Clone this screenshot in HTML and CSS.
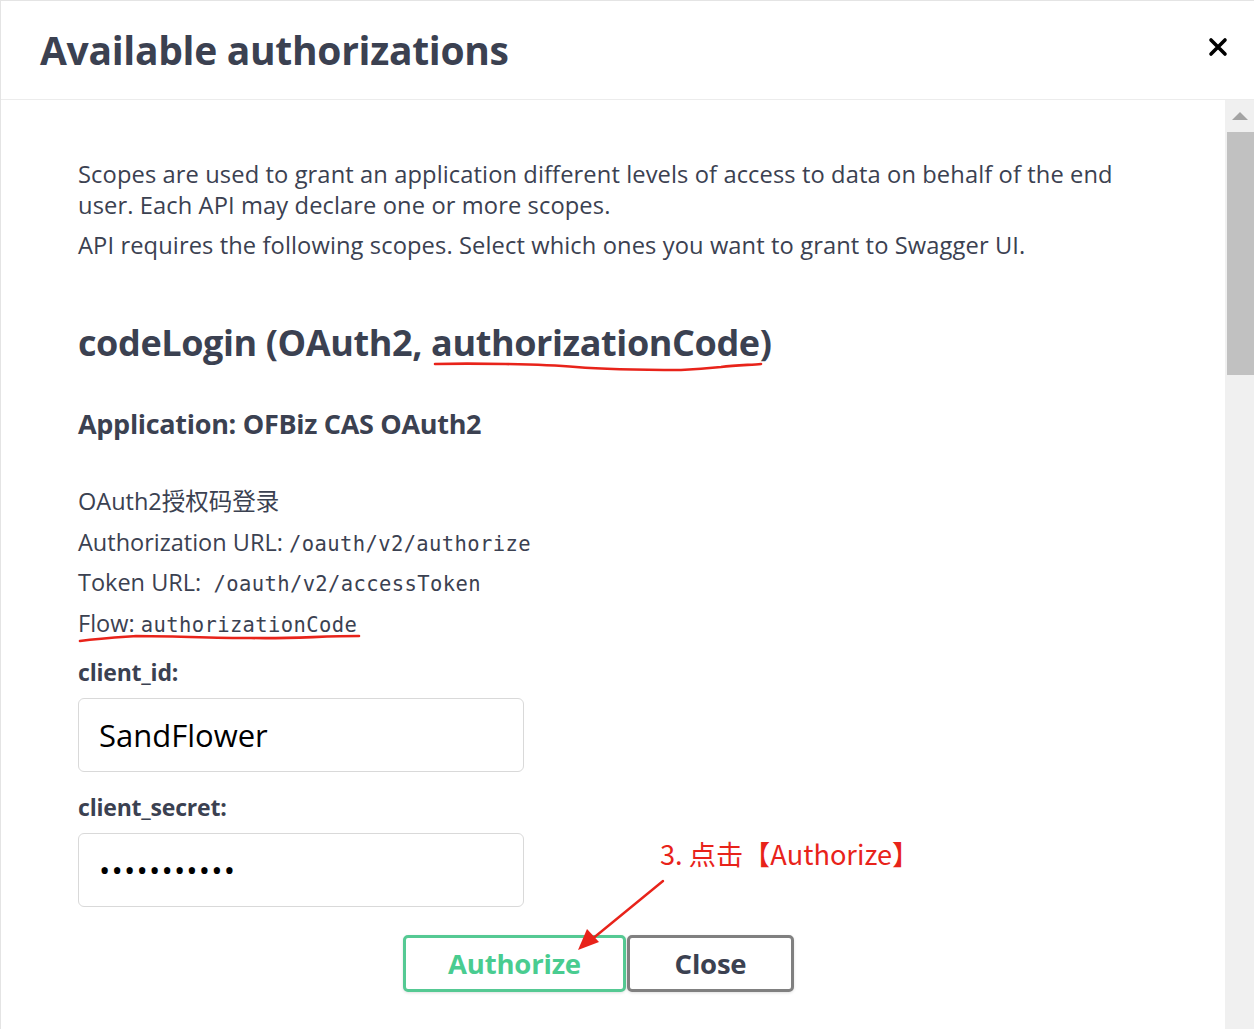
FILE: index.html
```html
<!DOCTYPE html>
<html lang="en">
<head>
<meta charset="utf-8">
<title>Available authorizations</title>
<link rel="stylesheet" href="styles.css">
</head>
<body>
<div class="modal">
  <header class="modal-header">
    <h1 class="modal-title">Available authorizations</h1>
    <button class="close-x" aria-label="Close">
      <svg width="20" height="20" viewBox="0 0 20 20"><path d="M3 3 L17 17 M17 3 L3 17" stroke="#000" stroke-width="3.6" stroke-linecap="round"/></svg>
    </button>
  </header>
  <div class="modal-body">
    <div class="content">
      <p class="desc">Scopes are used to grant an application different levels of access to data on behalf of the end<br>user. Each API may declare one or more scopes.</p>
      <p class="desc second">API requires the following scopes. Select which ones you want to grant to Swagger UI.</p>
      <h2 class="scheme-title">codeLogin (OAuth2, authorizationCode)</h2>
      <h3 class="app-title">Application: OFBiz CAS OAuth2</h3>
      <div class="info">
        <p class="info-row">OAuth2授权码登录</p>
        <p class="info-row">Authorization URL: <code>/oauth/v2/authorize</code></p>
        <p class="info-row">Token URL:&nbsp; <code>/oauth/v2/accessToken</code></p>
        <p class="info-row">Flow: <code>authorizationCode</code></p>
      </div>
      <label class="field-label">client_id:</label>
      <input class="field-input" type="text" value="SandFlower">
      <label class="field-label secret">client_secret:</label>
      <input class="field-input" type="password" value="abcdefghijk">
      <div class="btn-row">
        <button class="btn authorize">Authorize</button>
        <button class="btn close">Close</button>
      </div>

      <div class="note">3. 点击【Authorize】</div>
      <svg class="overlay" width="1225" height="929" viewBox="0 100 1225 929">
        <path d="M434 364 C 470 363, 540 364, 575 367 C 610 370, 650 370, 680 370 C 700 369, 710 368, 720 367 C 735 365, 750 365, 760 364" stroke="#e8231a" stroke-width="2.6" fill="none" stroke-linecap="round"/>
        <path d="M79 641 C 100 638, 120 637, 135 636 C 170 636, 210 638, 250 638 C 290 639, 320 636, 358 636" stroke="#e8231a" stroke-width="2.6" fill="none" stroke-linecap="round"/>
        <path d="M662 881 L590 940" stroke="#e8231a" stroke-width="2.4" fill="none" stroke-linecap="round"/>
        <path d="M577 950 L586 929 L598 942 Z" fill="#e8231a"/>
      </svg>
    </div>
    <div class="scrollbar">
      <div class="sb-arrow"></div>
      <div class="sb-thumb"></div>
    </div>
  </div>
</div>
</body>
</html>
```
FILE: styles.css
```css
* { box-sizing: border-box; }
html, body { margin: 0; padding: 0; background: #fff; }
body {
  font-family: "Open Sans", "Noto Sans", "Noto Sans CJK SC", sans-serif;
  color: #3b4151;
}
.modal {
  width: 1254px;
  height: 1029px;
  display: flex;
  flex-direction: column;
  overflow: hidden;
  border-top: 1px solid #e4e4e4;
  border-left: 1px solid #e4e4e4;
}
.modal-header {
  height: 99px;
  flex: none;
  display: flex;
  align-items: center;
  justify-content: space-between;
  padding: 0 26px 0 39px;
  border-bottom: 1px solid #ececec;
}
.modal-title {
  margin: 0 0 2px;
  font-size: 39px;
  font-weight: 700;
  letter-spacing: -0.3px;
  color: #3b4151;
}
.close-x {
  border: 0;
  background: none;
  padding: 0;
  width: 20px;
  height: 20px;
  margin-top: -6px;
  display: flex;
}
.modal-body {
  flex: 1;
  display: flex;
  min-height: 0;
}
.content {
  position: relative;
  flex: 1;
  padding: 59px 80px 0 77px;
}
.desc {
  margin: 0;
  font-size: 23.7px;
  line-height: 31px;
  letter-spacing: 0.1px;
}
.desc.second { margin-top: 9px; }
.scheme-title {
  margin: 60px 0 0;
  font-size: 36px;
  line-height: 44px;
  font-weight: 700;
  letter-spacing: -0.4px;
}
.app-title {
  margin: 42px 0 0;
  font-size: 27px;
  line-height: 34px;
  font-weight: 700;
  letter-spacing: -0.3px;
}
.info { margin-top: 40px; }
.info-row {
  margin: 0;
  font-size: 23.5px;
  line-height: 40.7px;
  height: 40.7px;
}
.info-row code {
  font-family: "DejaVu Sans Mono", "Liberation Mono", monospace;
  font-size: 20.5px;
  letter-spacing: 0.4px;
  color: #3b4151;
}
.field-label {
  display: block;
  margin-top: 13px;
  font-size: 23px;
  line-height: 30px;
  font-weight: 700;
  letter-spacing: -0.2px;
}
.field-label.secret { margin-top: 20px; }
.field-input {
  display: block;
  margin-top: 11px;
  width: 446px;
  height: 74px;
  border: 1px solid #d9d9d9;
  border-radius: 6px;
  padding: 0 20px;
  font-family: "Open Sans", "Noto Sans", sans-serif;
  font-size: 31px;
  color: #000;
  background: #fff;
  outline: none;
}
input[type="password"].field-input {
  font-size: 30px;
  letter-spacing: 1.2px;
}
.btn-row {
  display: flex;
  gap: 1px;
  margin-top: 28px;
  padding-left: 325px;
}
.btn {
  height: 57px;
  border-radius: 5px;
  background: #fff;
  font-family: "Open Sans", "Noto Sans", sans-serif;
  font-size: 27.5px;
  font-weight: 700;
  letter-spacing: -0.2px;
  padding: 0;
}
.btn.authorize {
  width: 223px;
  border: 3px solid #55c993;
  color: #49cc90;
  box-shadow: 0 1px 3px rgba(0,0,0,0.12);
}
.btn.close {
  width: 167px;
  border: 3px solid #808080;
  color: #3b4151;
  box-shadow: 0 1px 3px rgba(0,0,0,0.12);
}
.note {
  position: absolute;
  left: 659px;
  top: 735px;
  font-family: "Noto Sans CJK SC", sans-serif;
  font-size: 27.2px;
  line-height: 36px;
  color: #e8231a;
  white-space: nowrap;
}
.overlay {
  position: absolute;
  left: 0;
  top: 0;
  pointer-events: none;
}
.scrollbar {
  width: 29px;
  flex: none;
  background: #f0f0f0;
  display: flex;
  flex-direction: column;
  align-items: flex-end;
}
.sb-arrow {
  width: 0;
  height: 0;
  margin: 12px 6px 0 0;
  border-left: 8px solid transparent;
  border-right: 8px solid transparent;
  border-bottom: 8px solid #a3a3a3;
}
.sb-thumb {
  width: 27px;
  height: 243px;
  margin-top: 12px;
  background: #c1c1c1;
}
```
